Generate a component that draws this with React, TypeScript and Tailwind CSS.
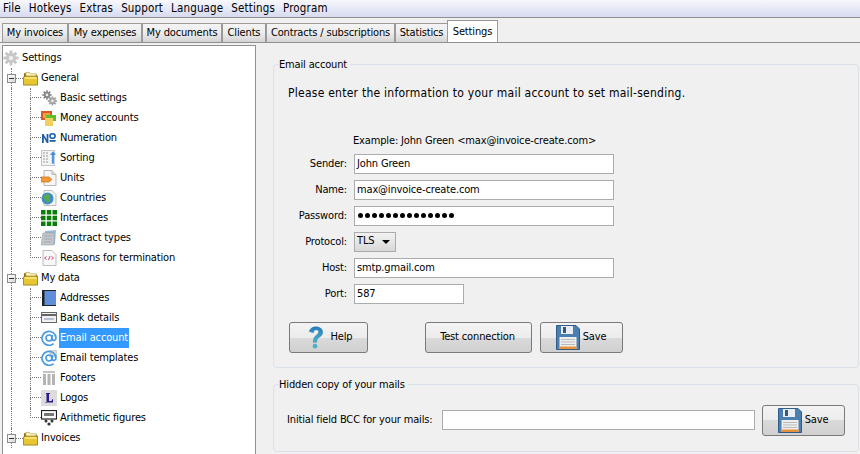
import React from "react";

const font = { fontFamily: '"DejaVu Sans Condensed", "DejaVu Sans", sans-serif' };

const I = ({ children }: { children: React.ReactNode }) => (
  <svg width="16" height="16" viewBox="0 0 16 16" className="shrink-0">{children}</svg>
);

const Gear = ({ c = "#b4b4b4" }: { c?: string }) => (
  <g>
    <circle cx="8" cy="8" r="5" fill={c} />
    {[0, 45, 90, 135].map((a) => (
      <rect key={a} x="6.6" y="0.5" width="2.8" height="15" fill={c} transform={`rotate(${a} 8 8)`} />
    ))}
    <circle cx="8" cy="8" r="2.2" fill="#eee" />
  </g>
);

const AtRing = () => (
  <g fill="none" stroke="#4a9be0">
    <path d="M12.600 13.600A7 7 0 1 1 15 8c0 2.600-3.400 3.400-3.800 1V5" strokeWidth="1.700" />
    <circle cx="8" cy="8" r="3" strokeWidth="1.700" />
  </g>
);

const icons: Record<string, React.ReactNode> = {
  root: <I><Gear c="#c6c6c6" /></I>,
  folder: (
    <svg width="15" height="15" viewBox="0 0 16 16" className="shrink-0">
      <path d="M1 2.500h6l1 1.500h7v11H1z" fill="#8a6d10" />
      <path d="M3 1.500h4l1 1.500h6v3H3z" fill="#fff6c8" stroke="#a58a20" strokeWidth=".6" />
      <path d="M.5 7l1-1.500h14V15H.5z" fill="#e8c630" stroke="#8a7010" strokeWidth=".8" />
      <rect x="2" y="6.500" width="12.500" height="2" fill="#f6e27a" />
    </svg>
  ),
  basic: (
    <I>
      <g transform="translate(1 0) scale(.62)"><Gear c="#888" /></g>
      <g transform="translate(6.500 6) scale(.62)"><Gear c="#a4a4a4" /></g>
    </I>
  ),
  money: (
    <I>
      <rect x="0" y="1" width="11" height="9" fill="#d9592a" />
      <rect x="2" y="3" width="7" height="5" fill="#f0a040" />
      <rect x="5" y="5" width="10" height="6" fill="#5cc02c" />
      <rect x="4" y="8" width="8" height="8" fill="#f2cf5e" />
    </I>
  ),
  num: (
    <I>
      <path d="M1 13V4h1.600l3 5.600V4H7.400v9H5.800L2.800 7.400V13z" fill="#1f5fa8" />
      <ellipse cx="11.500" cy="6" rx="2.600" ry="2.300" fill="none" stroke="#1f5fa8" strokeWidth="1.600" />
      <rect x="8.600" y="10" width="6" height="1.800" fill="#1f5fa8" />
    </I>
  ),
  sort: (
    <I>
      <rect x="0.500" y="0.500" width="13" height="15" fill="#f4f4f4" stroke="#c4c4c4" />
      <path d="M2 3h6M2 6h6M2 9h6M2 12h6" stroke="#9a9a9a" strokeWidth="1.200" strokeDasharray="2 1" />
      <path d="M12 1l3.500 4H13.300v9h-2.600V5H8.500z" fill="#3a8edb" stroke="#fff" strokeWidth=".5" />
    </I>
  ),
  units: (
    <I>
      <path d="M3 .5h8l4 4v11H3z" fill="#f6f6f6" stroke="#b8b8b8" />
      <path d="M11 .5v4h4" fill="#ddd" stroke="#b8b8b8" />
      <path d="M0 7h8l3 2.500L8 12H0z" fill="#f39a35" stroke="#c96f12" strokeWidth=".7" />
    </I>
  ),
  countries: (
    <I>
      <path d="M3 .5h8l4 4v11H3z" fill="#f4f4f4" stroke="#bdbdbd" />
      <circle cx="6.500" cy="8.500" r="6" fill="#3f8fc4" />
      <path d="M3 6l3-2 3 1-1 3 1 3-3 2-1-3-2-1z" fill="#5aa84a" />
    </I>
  ),
  interfaces: (
    <I>
      <path d="M0 0h4.500v4.500H0zM5.800 0h4.500v4.500H5.800zM11.500 0H16v4.500h-4.500zM0 5.800h4.500v4.500H0zM5.800 5.800h4.500v4.500H5.800zM11.500 5.800H16v4.500h-4.500zM0 11.500h4.500V16H0zM5.800 11.500h4.500V16H5.800zM11.500 11.500H16V16h-4.500z" fill="#0a7d0a" />
    </I>
  ),
  contract: (
    <I>
      <path d="M4 1l11-1-1 14-11 1z" fill="#9cbcd8" />
      <path d="M2 3h11v12H0z" fill="#c4c8cc" stroke="#8a8f94" strokeWidth=".5" />
      <path d="M3 6h8M3 9h8M2.500 12h8" stroke="#a3a7ab" />
    </I>
  ),
  reasons: (
    <I>
      <path d="M2 .5h9l4 4v11H2z" fill="#f8f8f8" stroke="#bdbdbd" />
      <path d="M5.500 6.500L3.500 8l2 1.500M7.500 10l1.500-4M10.500 6.500l2 1.500-2 1.500" fill="none" stroke="#e0457a" strokeWidth="1" />
    </I>
  ),
  addresses: (
    <I>
      <rect x="1" y="0" width="14" height="16" fill="#222" />
      <rect x="3.500" y="1" width="11.500" height="14" fill="#5f8fdc" />
    </I>
  ),
  bank: (
    <I>
      <rect x="0.500" y="2.500" width="15" height="10" fill="#f0f0f0" stroke="#666" />
      <rect x="1" y="4" width="14" height="2" fill="#666" />
      <path d="M3 9h10" stroke="#a9b4cc" strokeWidth="1.600" />
    </I>
  ),
  at: <I><AtRing /></I>,
  atdoc: (
    <I>
      <rect x="9" y="0" width="7" height="7" fill="#dcdcdc" stroke="#c4c4c4" />
      <AtRing />
    </I>
  ),
  footers: (
    <I>
      <rect x="2" y="1" width="12" height="2" fill="#c4c4c4" />
      <path d="M2 4h3v11H2zM6.500 4h3v11h-3zM11 4h3v11h-3z" fill="#b4b4b4" />
    </I>
  ),
  logos: (
    <I>
      <rect x="0" y="0" width="16" height="16" fill="#dcdcdc" />
      <path d="M5 3h4v1H8v7h2.500l1-2H12v3.500H4V12h1.500V4H5z" fill="#2d1a8e" />
    </I>
  ),
  arith: (
    <I>
      <rect x="0.500" y="0.500" width="15" height="8.500" fill="#fff" stroke="#222" strokeWidth="1.200" />
      <path d="M3 3h10v3H3z" fill="#777" />
      <circle cx="5" cy="11" r="1.500" fill="#333" />
      <circle cx="11" cy="11" r="1.500" fill="#333" />
      <circle cx="8" cy="14" r="1.600" fill="#333" />
    </I>
  ),
};

type Node = { label: string; icon: string; level: 1 | 2; last?: boolean; selected?: boolean };

const nodes: Node[] = [
  { label: "General", icon: "folder", level: 1 },
  { label: "Basic settings", icon: "basic", level: 2 },
  { label: "Money accounts", icon: "money", level: 2 },
  { label: "Numeration", icon: "num", level: 2 },
  { label: "Sorting", icon: "sort", level: 2 },
  { label: "Units", icon: "units", level: 2 },
  { label: "Countries", icon: "countries", level: 2 },
  { label: "Interfaces", icon: "interfaces", level: 2 },
  { label: "Contract types", icon: "contract", level: 2 },
  { label: "Reasons for termination", icon: "reasons", level: 2, last: true },
  { label: "My data", icon: "folder", level: 1 },
  { label: "Addresses", icon: "addresses", level: 2 },
  { label: "Bank details", icon: "bank", level: 2 },
  { label: "Email account", icon: "at", level: 2, selected: true },
  { label: "Email templates", icon: "atdoc", level: 2 },
  { label: "Footers", icon: "footers", level: 2 },
  { label: "Logos", icon: "logos", level: 2 },
  { label: "Arithmetic figures", icon: "arith", level: 2, last: true },
  { label: "Invoices", icon: "folder", level: 1 },
];

const Row = ({ n }: { n: Node }) =>
  n.level === 1 ? (
    <div className="flex h-5 items-stretch shrink-0">
      <div className="ml-[4px] flex w-[9px] flex-col items-center">
        <div className="h-[6px] w-0 border-l border-dotted border-[#777]" />
        <div className="flex h-[9px] w-[9px] items-center justify-center border border-[#8a8f96] bg-gradient-to-br from-white to-[#d8d8d8]">
          <div className="h-px w-[5px] bg-[#333]" />
        </div>
        <div className="h-[5px] w-0 border-l border-dotted border-[#777]" />
      </div>
      <div className="mt-[10px] h-0 w-[7px] border-t border-dotted border-[#777]" />
      <div className="flex items-center">{icons[n.icon]}</div>
      <div className="ml-[3px] flex items-center">{n.label}</div>
    </div>
  ) : (
    <div className="flex h-5 items-stretch shrink-0">
      <div className="ml-[8px] w-[19px] border-l border-dotted border-[#777]" />
      <div className="flex w-[11px] flex-col">
        <div className="h-[10px] border-b border-l border-dotted border-[#777]" />
        <div className={n.last ? "h-[10px]" : "h-[10px] border-l border-dotted border-[#777]"} />
      </div>
      <div className="flex items-center">{icons[n.icon]}</div>
      <div className="ml-[2px] flex items-center">
        <span className={n.selected ? "flex h-5 items-center bg-[#3399ff] px-px text-white" : "px-px"}>{n.label}</span>
      </div>
    </div>
  );

const Tab = ({ label, w, active }: { label: string; w: string; active?: boolean }) =>
  active ? (
    <div className={`${w} relative z-10 -ml-px flex h-[22px] items-start justify-center whitespace-nowrap border border-b-0 border-[#9a9a9a] bg-white pt-[3px]`}>
      {label}
    </div>
  ) : (
    <div className={`${w} flex h-[19px] items-center justify-center whitespace-nowrap border border-[#9a9a9a] border-b-0 bg-gradient-to-b from-[#f4f4f4] via-[#ececec] to-[#d4d4d4]`}>
      {label}
    </div>
  );

const Btn = ({ children, w, cls = "" }: { children: React.ReactNode; w: string; cls?: string }) => (
  <div className={`${w} ${cls} flex h-[31px] items-center justify-center rounded-[3px] border border-[#7a7a7a] bg-[linear-gradient(#f3f3f3_0%,#ececec_50%,#dadada_50%,#d0d0d0_100%)]`}>
    {children}
  </div>
);

const Floppy = () => (
  <svg width="24" height="25" viewBox="0 0 24 25" className="shrink-0">
    <path d="M0.500 0.500H20l3.500 3.500v20.500H0.500z" fill="#4a7fb0" stroke="#2f5c88" />
    <rect x="5" y="1" width="12" height="8" fill="#e8eef4" />
    <rect x="7" y="2" width="3" height="6" fill="#38587a" />
    <rect x="3.500" y="12" width="17" height="12" fill="#eeeeee" />
    <path d="M5 14.500h14M5 17h14M5 19.500h14" stroke="#bbb" />
    <rect x="3.500" y="21.500" width="17" height="2.500" fill="#e8913a" />
  </svg>
);

const Help = () => (
  <svg width="16" height="23" viewBox="0 0 24 34" className="shrink-0">
    <defs>
      <linearGradient id="q" x1="0" y1="0" x2="0" y2="1">
        <stop offset="0" stopColor="#1f7fc0" />
        <stop offset="1" stopColor="#4fb0c8" />
      </linearGradient>
    </defs>
    <path d="M2 8c1-5 6-7 10-7 6 0 10 3.500 10 8 0 4-2.500 6-5.500 8-2.500 1.700-3.500 3-3.500 7H8c0-6 2-8.500 4.500-10.500 2.500-2 3.500-2.800 3.500-4.800 0-2-1.500-3.200-3.800-3.200S8.500 7 8 10z" fill="url(#q)" stroke="#1c6a96" strokeWidth=".6" />
    <circle cx="10.500" cy="30" r="3.500" fill="#4fb0c8" />
  </svg>
);

const Field = ({ label, value, w = "w-[260px]", dots }: { label: string; value?: string; w?: string; dots?: boolean }) => (
  <div className="flex h-5 items-center">
    <div className="w-[80px] pr-[7px] pt-px text-right">{label}</div>
    {dots ? (
      <div className={`${w} flex h-5 items-center gap-[2px] border border-[#acacac] bg-white pl-[3px]`}>
        {Array.from({ length: 14 }).map((_, i) => (
          <span key={i} className="h-[5px] w-[5px] rounded-full bg-black" />
        ))}
      </div>
    ) : (
      <div className={`${w} flex h-5 items-center border border-[#acacac] bg-white pl-[2px] pt-px`}>{value}</div>
    )}
  </div>
);

const menus = ["File", "Hotkeys", "Extras", "Support", "Language", "Settings", "Program"];

export default function App() {
  return (
    <div style={font} className="flex h-[454px] w-[860px] flex-col overflow-hidden bg-[#f0f0f0] text-[11px] tracking-[-.15px] text-black">
      <div className="flex h-[18px] shrink-0 items-center gap-[8px] border-b border-[#8f8f8f] bg-gradient-to-b from-[#f7f8fc] to-[#d7dbef] pl-[3px] text-[11.500px] tracking-[.15px]">
        {menus.map((m) => (
          <span key={m}>{m}</span>
        ))}
      </div>
      <div className="flex h-[25px] shrink-0 items-end border-b border-[#8f8f8f] bg-[#f0f0f0] pl-[2px]">
        <Tab label="My invoices" w="w-[66px]" />
        <Tab label="My expenses" w="w-[74px]" />
        <Tab label="My documents" w="w-[80px]" />
        <Tab label="Clients" w="w-[44px]" />
        <Tab label="Contracts / subscriptions" w="w-[129px]" />
        <Tab label="Statistics" w="w-[53px]" />
        <Tab label="Settings" w="w-[51px]" active />
      </div>
      <div className="flex min-h-0 flex-1">
        <div className="ml-[2px] mt-[2px] flex w-[254px] shrink-0 flex-col overflow-hidden border border-b-0 border-[#8f8f8f] bg-white pt-[2px]">
          <div className="flex h-5 shrink-0 items-center">
            {icons.root}
            <span className="ml-[3px]">Settings</span>
          </div>
          {nodes.map((n) => (
            <Row key={n.label} n={n} />
          ))}
        </div>
        <div className="flex min-w-0 flex-1 flex-col pl-[17px] pr-px pt-[13px]">
          <fieldset className="h-[312px] rounded-[4px] border border-[#dbe1e8]">
            <legend className="ml-[5px] pr-[3px] pt-px">Email account</legend>
            <div className="pl-[14px] pt-[10px] text-[12px] tracking-[.25px]">Please enter the information to your mail account to set mail-sending.</div>
            <div className="mt-[32px] pl-[79px] leading-[14px]">Example: John Green &lt;max@invoice-create.com&gt;</div>
            <div className="mt-[6px] flex flex-col gap-[6px]">
              <Field label="Sender:" value="John Green" />
              <Field label="Name:" value="max@invoice-create.com" />
              <Field label="Password:" dots />
              <div className="flex h-5 items-center">
                <div className="w-[80px] pr-[7px] pt-px text-right">Protocol:</div>
                <div className="flex h-5 w-[42px] items-center border border-[#acacac] bg-gradient-to-b from-[#f2f2f2] to-[#d8d8d8] pl-[2px]">
                  TLS
                  <span className="ml-[8px] h-0 w-0 border-x-[4px] border-t-[4px] border-x-transparent border-t-black" />
                </div>
              </div>
              <Field label="Host:" value="smtp.gmail.com" />
              <Field label="Port:" value="587" w="w-[110px]" />
            </div>
            <div className="mt-[18px] flex pl-[15px]">
              <Btn w="w-[79px]" cls="pl-[3px]"><Help /><span className="ml-[7px]">Help</span></Btn>
              <Btn w="w-[107px]" cls="ml-[57px] pr-[2px]">Test connection</Btn>
              <Btn w="w-[83px]" cls="ml-[8px] pr-[1px]"><Floppy /><span className="ml-[3px]">Save</span></Btn>
            </div>
          </fieldset>
          <fieldset className="mt-[8px] h-[76px] rounded-[4px] border border-[#dbe1e8]">
            <legend className="ml-[5px] pr-[3px] pt-px">Hidden copy of your mails</legend>
            <div className="mt-[11px] flex items-center pl-[13px]">
              <span className="w-[155px] whitespace-nowrap">Initial field BCC for your mails:</span>
              <div className="h-5 w-[313px] border border-[#acacac] bg-white" />
              <Btn w="w-[83px]" cls="ml-[7px] pr-[1px]"><Floppy /><span className="ml-[3px]">Save</span></Btn>
            </div>
          </fieldset>
        </div>
      </div>
    </div>
  );
}
